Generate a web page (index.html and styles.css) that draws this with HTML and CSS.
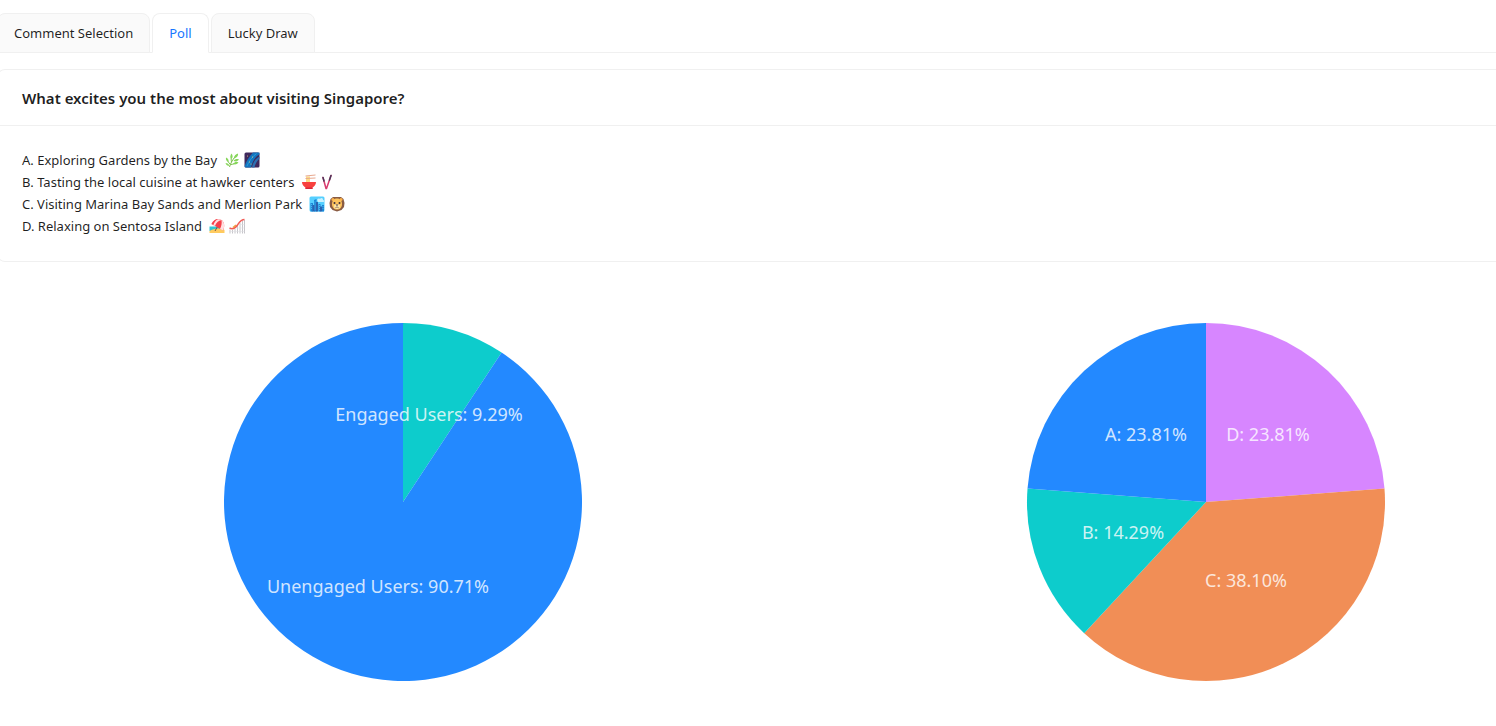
FILE: index.html
```
<!DOCTYPE html>
<html lang="en">
<head>
    <meta charset="UTF-8">
    <title>Poll</title>
    <link rel="stylesheet" href="styles.css">
</head>
<body>
    <div class="page">
        <div class="tabs" role="tablist">
            <button class="tab" type="button" role="tab">Comment Selection</button>
            <button class="tab active" type="button" role="tab" aria-selected="true">Poll</button>
            <button class="tab" type="button" role="tab">Lucky Draw</button>
        </div>

        <div class="card">
            <h1 class="card-title">What excites you the most about visiting Singapore?</h1>
            <ul class="options">
                <li>
                    <span>A. Exploring Gardens by the Bay</span>
                    <!-- herb -->
                    <svg class="emoji" viewBox="0 0 32 32">
                        <path d="M11 30C13 22 18 14 25 6M12 24C9 21 7 18 6 14M15 20C14 15 14 11 15 7M13 25C18 25 22 23 26 20" fill="none" stroke="#7cc04b" stroke-width="2"/>
                        <path d="M9 20C5 19 3 15 4 11C8 12 10 16 9 20ZM15 14C12 11 12 7 15 3C18 7 18 11 15 14ZM20 13C20 8 23 4 28 3C29 8 25 12 20 13ZM19 18C22 14 26 13 30 15C27 19 23 20 19 18ZM18 24C21 20 25 19 29 21C26 25 22 26 18 24ZM11 28C7 28 4 26 3 22C7 22 10 24 11 28Z" fill="#86d65a"/>
                    </svg>
                    <!-- milky way -->
                    <svg class="emoji" viewBox="0 0 32 32">
                        <rect x="1" y="1" width="30" height="30" rx="3" fill="#3f285c"/>
                        <path d="M1 29C4 18 10 10 18 1H31V5C21 10 17 20 14 31H3Z" fill="#1473bc"/>
                        <path d="M16 31C18 20 23 13 31 9V13C25 19 22 25 21 31Z" fill="#2d6fb0"/>
                        <path d="M6 28C10 18 16 10 25 3" fill="none" stroke="#249bdc" stroke-width="2"/>
                        <g fill="#f6d76a"><circle cx="11" cy="20" r="1"/><circle cx="17" cy="10" r="1"/><circle cx="7" cy="8" r="1"/><circle cx="14" cy="24" r="1"/></g>
                    </svg>
                </li>
                <li>
                    <span>B. Tasting the local cuisine at hawker centers</span>
                    <!-- noodle bowl -->
                    <svg class="emoji" viewBox="0 0 32 32">
                        <path d="M10 5H18V18H10Z" fill="#ffe394"/>
                        <path d="M12 5V18M16 5V18" stroke="#f4c25d"/>
                        <path d="M9 4L29 2M9 9L29 8" stroke="#e8a88f" stroke-width="2"/>
                        <path d="M2 16H30C30 21 27 25 23 27V30H9V27C5 25 2 21 2 16Z" fill="#f8413e"/>
                        <path d="M9 27H23V30H9Z" fill="#d8283a"/>
                    </svg>
                    <!-- chopsticks -->
                    <svg class="emoji" viewBox="0 0 32 32">
                        <path d="M4 7L10 29M20 3L11 29" stroke="#d83b6e" stroke-width="3" stroke-linecap="round"/>
                        <path d="M4 7L6 14M20 3L17 12" stroke="#4b3659" stroke-width="3" stroke-linecap="round"/>
                    </svg>
                </li>
                <li>
                    <span>C. Visiting Marina Bay Sands and Merlion Park</span>
                    <!-- cityscape -->
                    <svg class="emoji" viewBox="0 0 32 32">
                        <rect x="1" y="1" width="30" height="30" rx="3" fill="#55cfff"/>
                        <path d="M17 10C15 6 19 4 22 6C24 2 29 5 28 8C32 9 31 12 28 12H18Z" fill="#c9f1ff"/>
                        <path d="M3 14H8V31H3ZM10 8L15 6V31H10ZM19 16H23V31H19ZM26 18H30V31H26Z" fill="#1c86d6"/>
                        <path d="M7 18H11V31H7ZM14 12H18V31H14ZM22 21H26V31H22Z" fill="#2a62b0"/>
                        <path d="M5 16V28M12 11V28M21 18V28M28 20V28" stroke="#8adfff" stroke-width="1" stroke-dasharray="2 2"/>
                    </svg>
                    <!-- lion -->
                    <svg class="emoji" viewBox="0 0 32 32">
                        <path d="M8 2H24L29 6L31 14L30 22L25 28L16 31L7 28L2 22L1 14L3 6Z" fill="#8a5c43"/>
                        <circle cx="8" cy="7" r="3" fill="#ffb34a"/>
                        <circle cx="24" cy="7" r="3" fill="#ffb34a"/>
                        <path d="M16 5C23 5 26 10 26 16C26 23 22 27 16 27S6 23 6 16C6 10 9 5 16 5Z" fill="#ffc45c"/>
                        <ellipse cx="16" cy="21" rx="6" ry="5" fill="#ffe8a8"/>
                        <circle cx="11" cy="14" r="2" fill="#3c2d3b"/>
                        <circle cx="21" cy="14" r="2" fill="#3c2d3b"/>
                        <path d="M13 17H19L16 20Z" fill="#4b3038"/>
                        <path d="M16 20V22M12 23Q14 25 16 22Q18 25 20 23" fill="none" stroke="#765044"/>
                    </svg>
                </li>
                <li>
                    <span>D. Relaxing on Sentosa Island</span>
                    <!-- beach with umbrella -->
                    <svg class="emoji" viewBox="0 0 32 32">
                        <path d="M1 17H24V26H1Z" fill="#31c5d2"/>
                        <path d="M1 26C8 21 23 19 31 24V30H1Z" fill="#ffcb5f"/>
                        <path d="M20 12L12 26" stroke="#775449" stroke-width="2"/>
                        <path d="M5 12C9 3 18 0 25 4C31 8 32 17 28 25Z" fill="#f6404a"/>
                        <path d="M5 12C9 3 18 0 25 4C19 5 14 9 12 16ZM25 4C31 8 32 17 28 25L22 22C25 16 26 10 25 4Z" fill="#ffdfe0"/>
                        <path d="M5 12C8 5 13 2 18 2C13 5 10 9 9 14Z" fill="#f6404a"/>
                    </svg>
                    <!-- roller coaster -->
                    <svg class="emoji" viewBox="0 0 32 32">
                        <path d="M2 23V31M7 24V31M12 22V31M17 16V31M22 9V31M27 5V31M31 4V31" fill="none" stroke="#c6c5ca" stroke-width="2"/>
                        <path d="M1 27H31M15 20H31M21 13H31" fill="none" stroke="#dddce0"/>
                        <path d="M1 20C9 24 13 20 17 14C21 8 23 3 31 3" fill="none" stroke="#f25b55" stroke-width="3"/>
                        <path d="M8 19L14 14" stroke="#f0a13c" stroke-width="3"/>
                    </svg>
                </li>
            </ul>
        </div>

        <div class="charts">
            <svg class="pie" viewBox="-180 -180 360 360" role="img" aria-label="User engagement">
                <path class="teal" d="M0 0V-179A179 179 0 0 1 98.6 -149.4Z"/>
                <path class="blue" d="M0 0L98.6 -149.4A179 179 0 1 1 0 -179Z"/>
                <text x="26" y="-81">Engaged Users: 9.29%</text>
                <text x="-25" y="91">Unengaged Users: 90.71%</text>
            </svg>
            <svg class="pie" viewBox="-180 -180 360 360" role="img" aria-label="Votes per option">
                <path class="purple" d="M0 0V-179A179 179 0 0 1 178.5 -13.4Z"/>
                <path class="orange" d="M0 0L178.5 -13.4A179 179 0 0 1 -121.8 131.2Z"/>
                <path class="teal" d="M0 0L-121.8 131.2A179 179 0 0 1 -178.5 -13.4Z"/>
                <path class="blue" d="M0 0L-178.5 -13.4A179 179 0 0 1 0 -179Z"/>
                <text x="-60" y="-61">A: 23.81%</text>
                <text x="62" y="-61">D: 23.81%</text>
                <text x="-83" y="37">B: 14.29%</text>
                <text x="40" y="85">C: 38.10%</text>
            </svg>
        </div>
    </div>
</body>
</html>
```
FILE: styles.css
```
* {
    box-sizing: border-box;
}
body {
    margin: 0;
    background-color: #fff;
    color: rgba(0, 0, 0, 0.88);
    font-family: "Noto Sans", sans-serif;
    font-size: 13px;
    line-height: 22px;
}
.page {
    margin-left: -3px;
    padding-top: 13px;
}
.tabs {
    display: flex;
    gap: 2px;
    margin-bottom: 16px;
    border-bottom: 1px solid #f0f0f0;
}
.tab {
    height: 40px;
    margin-bottom: -1px;
    padding: 0 16px;
    border: 1px solid #f0f0f0;
    border-radius: 8px 8px 0 0;
    background-color: #fafafa;
    color: inherit;
    font: inherit;
    cursor: pointer;
}
.tab.active {
    border-bottom-color: #fff;
    background-color: #fff;
    color: #1677ff;
}
.card {
    border: 1px solid #f0f0f0;
    border-right: none;
    border-radius: 8px 0 0 8px;
}
.card-title {
    display: flex;
    align-items: center;
    height: 56px;
    margin: 0 0 -1px;
    padding: 0 24px;
    border-bottom: 1px solid #f0f0f0;
    font-size: 15px;
    font-weight: 600;
}
.options {
    margin: 0;
    padding: 24px;
    list-style: none;
}
.options li {
    display: flex;
    align-items: center;
    gap: 4px;
}
.options span {
    margin-right: 3px;
}
.emoji {
    width: 16px;
    height: 16px;
}
.charts {
    display: flex;
    justify-content: space-between;
    padding: 60px 110px 40px 226px;
}
.pie {
    width: 360px;
    height: 360px;
}
.pie path {
    fill-opacity: 0.95;
}
.pie text {
    fill: #fff;
    fill-opacity: 0.8;
    font-size: 18px;
    text-anchor: middle;
}
.blue {
    fill: #1783ff;
}
.teal {
    fill: #00c9c9;
}
.orange {
    fill: #f0884d;
}
.purple {
    fill: #d580ff;
}
```
